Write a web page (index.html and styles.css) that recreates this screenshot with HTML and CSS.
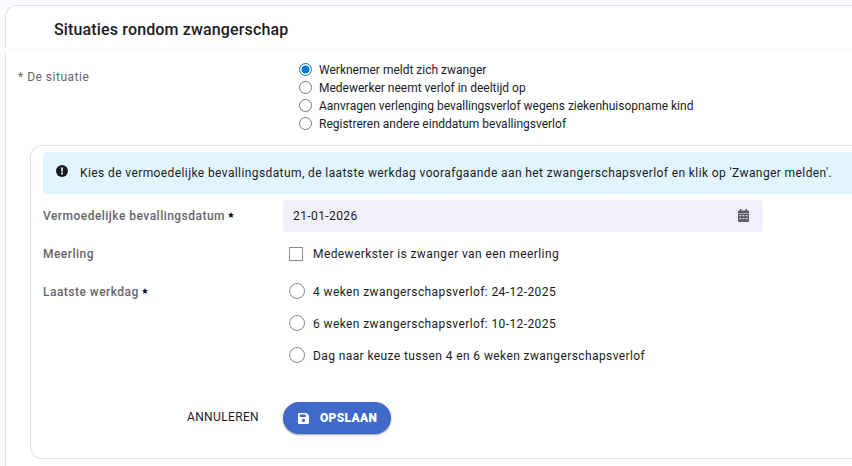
FILE: index.html
```html
<!DOCTYPE html>
<html lang="nl">
<head>
    <meta charset="UTF-8">
    <title>Situaties rondom zwangerschap</title>
    <link rel="stylesheet" href="styles.css">
</head>
<body>
    <header class="panel-header">
        <h1>Situaties rondom zwangerschap</h1>
    </header>
    <main class="panel-body">
        <div class="situation">
            <div class="situation-label">* De situatie</div>
            <div class="situation-options">
                <label><span class="radio small checked"></span><span class="text">Werknemer meldt zich zwanger</span></label>
                <label><span class="radio small"></span><span class="text">Medewerker neemt verlof in deeltijd op</span></label>
                <label><span class="radio small"></span><span class="text">Aanvragen verlenging bevallingsverlof wegens ziekenhuisopname kind</span></label>
                <label><span class="radio small"></span><span class="text">Registreren andere einddatum bevallingsverlof</span></label>
            </div>
        </div>
        <section class="card">
            <div class="info">
                <svg class="info-icon" viewBox="0 0 12 12">
                    <circle cx="6" cy="6" r="6" fill="#1b1b1f"/>
                    <path d="M5 2.4h2L6.7 6.7H5.3z" fill="#e1f5fe"/>
                    <circle cx="6" cy="8.6" r="1.05" fill="#e1f5fe"/>
                </svg>
                <span>Kies de vermoedelijke bevallingsdatum, de laatste werkdag voorafgaande aan het zwangerschapsverlof en klik op 'Zwanger melden'.</span>
            </div>
            <div class="row row-date">
                <div class="row-label">Vermoedelijke bevallingsdatum <svg class="star" viewBox="0 0 10 10"><path d="M5 0l1.5 3.2 3.5.4-2.6 2.4.7 3.5L5 7.8 1.9 9.5 2.6 6 0 3.6l3.5-.4z"/></svg></div>
                <div class="date-field">
                    <span>21-01-2026</span>
                    <svg class="calendar" viewBox="0 0 11 13">
                        <path fill="#5c5c62" d="M2 0h1.500v1.500h4V0H9v1.500h1a1 1 0 0 1 1 1V4H0V2.500a1 1 0 0 1 1-1h1zM0 4.600h11V12a1 1 0 0 1-1 1H1a1 1 0 0 1-1-1z"/>
                        <path fill="#d5d4de" d="M1.300 6h2v1.300h-2zM4.500 6h2v1.300h-2zM7.700 6h2v1.300h-2zM1.300 9h2v1.300h-2zM4.500 9h2v1.300h-2zM7.700 9h2v1.300h-2z"/>
                    </svg>
                </div>
            </div>
            <div class="row row-multiple">
                <div class="row-label">Meerling</div>
                <label class="option"><span class="checkbox"></span>Medewerkster is zwanger van een meerling</label>
            </div>
            <div class="row row-lastday">
                <div class="row-label">Laatste werkdag <svg class="star" viewBox="0 0 10 10"><path d="M5 0l1.5 3.2 3.5.4-2.6 2.4.7 3.5L5 7.8 1.9 9.5 2.6 6 0 3.6l3.5-.4z"/></svg></div>
                <div>
                    <label class="option"><span class="radio"></span>4 weken zwangerschapsverlof: 24-12-2025</label>
                    <label class="option"><span class="radio"></span>6 weken zwangerschapsverlof: 10-12-2025</label>
                    <label class="option"><span class="radio"></span>Dag naar keuze tussen 4 en 6 weken zwangerschapsverlof</label>
                </div>
            </div>
            <div class="actions">
                <button class="cancel">ANNULEREN</button>
                <button class="save">
                    <svg class="save-icon" viewBox="0 0 11 11">
                        <path fill="#fff" fill-rule="evenodd" d="M1 0h7.500L11 2.500V10a1 1 0 0 1-1 1H1a1 1 0 0 1-1-1V1a1 1 0 0 1 1-1zM1.800 1.600V4h6V1.600zM5.500 5.800a1.600 1.600 0 1 0 0 3.200 1.600 1.600 0 0 0 0-3.200z"/>
                    </svg>
                    <span>OPSLAAN</span>
                </button>
            </div>
        </section>
    </main>
</body>
</html>
```
FILE: styles.css
```css
* {
    box-sizing: border-box;
}
body {
    margin: 0;
    padding: 5px 0 0 5px;
    height: 466px;
    overflow: hidden;
    background: #fdfbff;
    color: #1b1b1f;
    font-family: Roboto, sans-serif;
    font-size: 12px;
    letter-spacing: 0.4px;
}
.panel-header {
    height: 43px;
    padding: 0 0 0 48px;
    display: flex;
    align-items: center;
    background: #fff;
    border: 1px solid #e3e1ec;
    border-width: 1px 0 0 1px;
    border-radius: 12px 0 0 0;
}
h1 {
    margin: 5px 0 0;
    font-size: 16px;
    font-weight: 500;
    line-height: 24px;
    letter-spacing: 0.15px;
}
.panel-body {
    height: 420px;
    margin-top: 5px;
    padding: 7px 0 0 12px;
    background: #fff;
    border-left: 1px solid #e3e1ec;
}
.situation {
    display: grid;
    grid-template-columns: 281px 1fr;
    height: 85px;
}
.situation-label {
    padding-top: 9px;
    line-height: 16px;
    color: #66656b;
    letter-spacing: 0.5px;
}
.situation-options label {
    display: flex;
    align-items: center;
    height: 18px;
    gap: 7px;
    letter-spacing: 0;
}
.situation-options .text {
    padding-top: 2px;
}
.radio {
    flex: none;
    width: 16px;
    height: 16px;
    margin-right: 8px;
    border: 1px solid #8c8c8c;
    border-radius: 50%;
    background: #fff;
}
.radio.small {
    width: 13px;
    height: 13px;
    margin: 0;
    border-color: #767676;
}
.radio.checked {
    border-color: #0078d7;
    background: radial-gradient(circle, #0078d7 3.7px, #fff 4.3px);
}
.card {
    height: 314px;
    margin-left: 12px;
    padding: 6px 0 0 12px;
    border: 1px solid #e3e1ec;
    border-right: 0;
    border-radius: 12px 0 0 12px;
}
.info {
    display: flex;
    align-items: center;
    height: 42px;
    padding-left: 13px;
    gap: 12px;
    background: #e1f5fe;
    border-radius: 4px 0 0 4px;
    white-space: nowrap;
}
.info-icon {
    flex: none;
    width: 12px;
    height: 12px;
    margin-top: -4px;
}
.row {
    display: grid;
    grid-template-columns: 240px 480px;
}
.row-date {
    margin-top: 6px;
}
.row-label {
    line-height: 32px;
    font-weight: 500;
    color: #66656b;
    letter-spacing: 0.47px;
}
.star {
    width: 6px;
    height: 6px;
    margin-left: 0;
    vertical-align: 2px;
    fill: #00174b;
}
.date-field {
    display: flex;
    align-items: center;
    justify-content: space-between;
    height: 32px;
    padding: 0 14px 0 10px;
    background: #f0effa;
    border-radius: 4px;
}
.calendar {
    width: 11px;
    height: 13px;
    margin-top: -1px;
}
.row-multiple {
    margin-top: 6px;
}
.option {
    display: flex;
    align-items: center;
    height: 32px;
    padding-left: 6px;
}
.option .radio {
    margin-top: -2px;
}
.checkbox {
    width: 14px;
    height: 14px;
    margin-right: 10px;
    border: 1px solid #8c8c8c;
    background: #fff;
}
.row-lastday {
    margin-top: 6px;
}
.actions {
    display: flex;
    margin-top: 30px;
}
button {
    padding: 0;
    border: 0;
    font-family: inherit;
    font-size: 12px;
}
.cancel {
    width: 216px;
    margin-right: 24px;
    padding-bottom: 2px;
    text-align: right;
    background: none;
    color: #1b1b1f;
    letter-spacing: 0.36px;
}
.save {
    display: flex;
    align-items: center;
    width: 108px;
    height: 32px;
    padding-left: 15px;
    gap: 11px;
    border-radius: 16px;
    background: #4169c9;
    color: #fff;
    font-weight: 900;
    letter-spacing: 0.3px;
    box-shadow: 0 1px 2px rgba(0, 0, 0, 0.4);
}
.save-icon {
    width: 11px;
    height: 11px;
}
```
